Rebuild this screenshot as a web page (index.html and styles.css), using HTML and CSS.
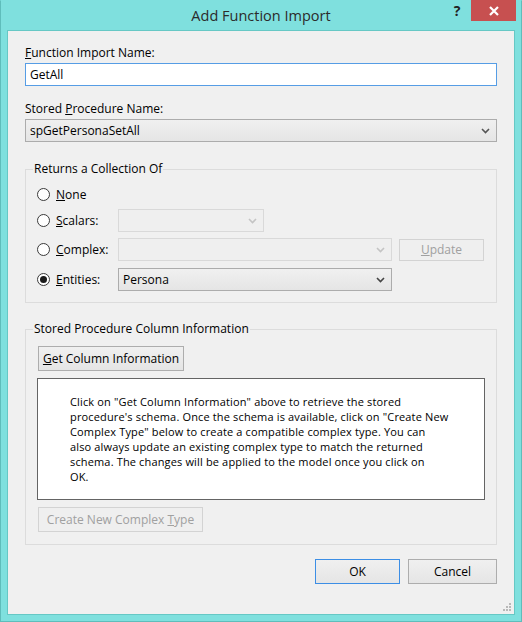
FILE: index.html
```html
<!DOCTYPE html>
<html>
<head>
<meta charset="utf-8">
<link rel="stylesheet" href="styles.css">
</head>
<body>
<div class="window">
  <div class="titlebar">
    <div class="spacer"></div>
    <div class="title">Add Function Import</div>
    <div class="controls">
      <div class="help">?</div>
      <div class="close">
        <svg width="12" height="12" viewBox="0 0 12 12"><path d="M2 2 L10 10 M10 2 L2 10" stroke="#fff" stroke-width="2.2" fill="none"/></svg>
      </div>
    </div>
  </div>
  <div class="client">
    <div class="label first"><u>F</u>unction Import Name:</div>
    <div class="textbox focused">GetAll</div>
    <div class="label second">Stored <u>P</u>rocedure Name:</div>
    <div class="combo">
      <span>spGetPersonaSetAll</span>
      <svg class="chev" width="9" height="6" viewBox="0 0 9 6"><path d="M1 1 L4.5 4.5 L8 1" stroke="#555" stroke-width="1.6" fill="none"/></svg>
    </div>

    <fieldset class="group returns">
      <legend>Returns a Collection Of</legend>
      <div class="rrow r1">
        <div class="radio"><span class="circle"></span><span><u>N</u>one</span></div>
      </div>
      <div class="rrow r2">
        <div class="radio"><span class="circle"></span><span><u>S</u>calars:</span></div>
        <div class="combo disabled w-scalar">
          <span></span>
          <svg class="chev" width="9" height="6" viewBox="0 0 9 6"><path d="M1 1 L4.5 4.5 L8 1" stroke="#c4c4c4" stroke-width="1.6" fill="none"/></svg>
        </div>
      </div>
      <div class="rrow r3">
        <div class="radio"><span class="circle"></span><span><u>C</u>omplex:</span></div>
        <div class="combo disabled w-wide">
          <span></span>
          <svg class="chev" width="9" height="6" viewBox="0 0 9 6"><path d="M1 1 L4.5 4.5 L8 1" stroke="#c4c4c4" stroke-width="1.6" fill="none"/></svg>
        </div>
        <div class="button disabled update"><span><u>U</u>pdate</span></div>
      </div>
      <div class="rrow r4">
        <div class="radio"><span class="circle checked"></span><span><u>E</u>ntities:</span></div>
        <div class="combo w-wide">
          <span>Persona</span>
          <svg class="chev" width="9" height="6" viewBox="0 0 9 6"><path d="M1 1 L4.5 4.5 L8 1" stroke="#444" stroke-width="1.6" fill="none"/></svg>
        </div>
      </div>
    </fieldset>

    <fieldset class="group columns">
      <legend>Stored Procedure Column Information</legend>
      <div class="button getcol"><span><u>G</u>et Column Information</span></div>
      <div class="infobox">
        <div>Click on "Get Column Information" above to retrieve the stored</div>
        <div>procedure's schema. Once the schema is available, click on "Create New</div>
        <div>Complex Type" below to create a compatible complex type. You can</div>
        <div>also always update an existing complex type to match the returned</div>
        <div>schema. The changes will be applied to the model once you click on</div>
        <div>OK.</div>
      </div>
      <div class="button disabled createnew"><span>Create New Complex <u>T</u>ype</span></div>
    </fieldset>

    <div class="footer">
      <div class="button default ok"><span>OK</span></div>
      <div class="button cancel"><span>Cancel</span></div>
    </div>

    <svg class="grip" width="10" height="10" viewBox="0 0 10 10">
      <rect x="7" y="1" width="2" height="2" fill="#b8b8b8"/>
      <rect x="4" y="4" width="2" height="2" fill="#b8b8b8"/>
      <rect x="7" y="4" width="2" height="2" fill="#b8b8b8"/>
      <rect x="1" y="7" width="2" height="2" fill="#b8b8b8"/>
      <rect x="4" y="7" width="2" height="2" fill="#b8b8b8"/>
      <rect x="7" y="7" width="2" height="2" fill="#b8b8b8"/>
    </svg>
  </div>
</div>
</body>
</html>
```
FILE: styles.css
```css
* { box-sizing: border-box; }
html, body { margin: 0; padding: 0; }
body {
  width: 522px;
  height: 622px;
  overflow: hidden;
  font-family: "Open Sans", "Noto Sans", sans-serif;
  font-size: 12px;
  color: #000;
}
.window {
  width: 522px;
  height: 622px;
  background: #7fe0de;
  border: 1px solid #5fbdbb;
  border-top-color: #7fe0de;
  display: flex;
  flex-direction: column;
}
.titlebar {
  height: 29px;
  display: grid;
  grid-template-columns: 1fr auto 1fr;
  align-items: start;
}
.title {
  font-size: 14.5px;
  line-height: 29px;
  color: #2b2b2b;
}
.controls {
  display: flex;
  justify-content: flex-end;
  align-items: flex-start;
  padding-right: 5px;
  margin-top: -1px;
}
.help {
  font-weight: bold;
  font-size: 14px;
  color: #222;
  line-height: 22px;
  width: 14px;
  margin-right: 7px;
  text-align: center;
}
.close {
  width: 45px;
  height: 21px;
  background: #c75050;
  display: flex;
  align-items: center;
  justify-content: center;
}
.client {
  position: relative;
  margin-left: 6px;
  width: 508px;
  height: 585px;
  background: #f0f0f0;
  border: 1px solid #66c8c5;
  padding: 0 17px;
  display: flex;
  flex-direction: column;
}
.label {
  line-height: 16px;
  height: 16px;
}
.label.first { margin-top: 14px; }
.label.second { margin-top: 15px; }
.textbox {
  margin-top: 2px;
  height: 23px;
  background: #fff;
  border: 1px solid #acacac;
  padding: 0 4px;
  line-height: 21px;
}
.textbox.focused { border-color: #569de5; }
.combo {
  margin-top: 2px;
  height: 23px;
  border: 1px solid #acacac;
  background: linear-gradient(#f0f0f0, #e5e5e5);
  display: flex;
  align-items: center;
  justify-content: space-between;
  padding: 0 6px 0 4px;
  line-height: 21px;
}
.combo.disabled {
  border-color: #d9d9d9;
  background: #efefef;
}
.chev { flex: none; }

fieldset.group {
  margin: 0;
  border: 1px solid #dcdcdc;
  min-width: 0;
}
fieldset.group legend {
  padding: 0 1px;
  line-height: 16px;
}
.returns {
  margin-top: 19px !important;
  padding: 6px 11px 11px 11px;
}
.returns legend { margin-left: -4px; }
.rrow {
  display: flex;
  align-items: center;
  height: 23px;
}
.r2 { margin-top: 3px; }
.r3 { margin-top: 6px; }
.r4 { margin-top: 7px; }
.rrow .combo { margin-top: 0; }
.radio {
  width: 81px;
  flex: none;
  display: flex;
  align-items: center;
}
.circle {
  width: 13px;
  height: 13px;
  border: 1px solid #3a3a3a;
  border-radius: 50%;
  background: #fff;
  margin-right: 6px;
  flex: none;
  display: flex;
  align-items: center;
  justify-content: center;
}
.circle.checked::after {
  content: "";
  width: 7px;
  height: 7px;
  border-radius: 50%;
  background: #1a1a1a;
}
.w-scalar { width: 146px; }
.w-wide { width: 274px; }

.button {
  border: 1px solid #adadad;
  background: linear-gradient(#f0f0f0, #e5e5e5);
  display: flex;
  align-items: center;
  justify-content: center;
  flex: none;
}
.button.disabled {
  border-color: #d3d3d3;
  background: #efefef;
  color: #a0a0a0;
}
.button.default { border-color: #3c8ee5; }
.update {
  width: 85px;
  height: 22px;
  margin-left: 7px;
}
.columns {
  margin-top: 18px !important;
  padding: 9px 12px 12px 12px;
}
.columns legend { margin-left: -5px; }
.getcol {
  width: 146px;
  height: 25px;
}
.infobox {
  margin-top: 7px;
  margin-left: -1px;
  height: 122px;
  width: 448px;
  background: #fff;
  border: 1px solid #646464;
  padding: 15px 0 0 32px;
  font-size: 11px;
  letter-spacing: 0.15px;
  line-height: 15px;
}
.infobox div {
  height: 15px;
  line-height: 15px;
  white-space: nowrap;
}
.createnew {
  margin-top: 7px;
  width: 165px;
  height: 25px;
}
.footer {
  margin-top: 14px;
  display: flex;
  justify-content: flex-end;
  gap: 8px;
}
.ok { width: 85px; height: 25px; }
.cancel { width: 89px; height: 25px; }
.grip {
  position: absolute;
  right: 2px;
  bottom: 2px;
}
```
